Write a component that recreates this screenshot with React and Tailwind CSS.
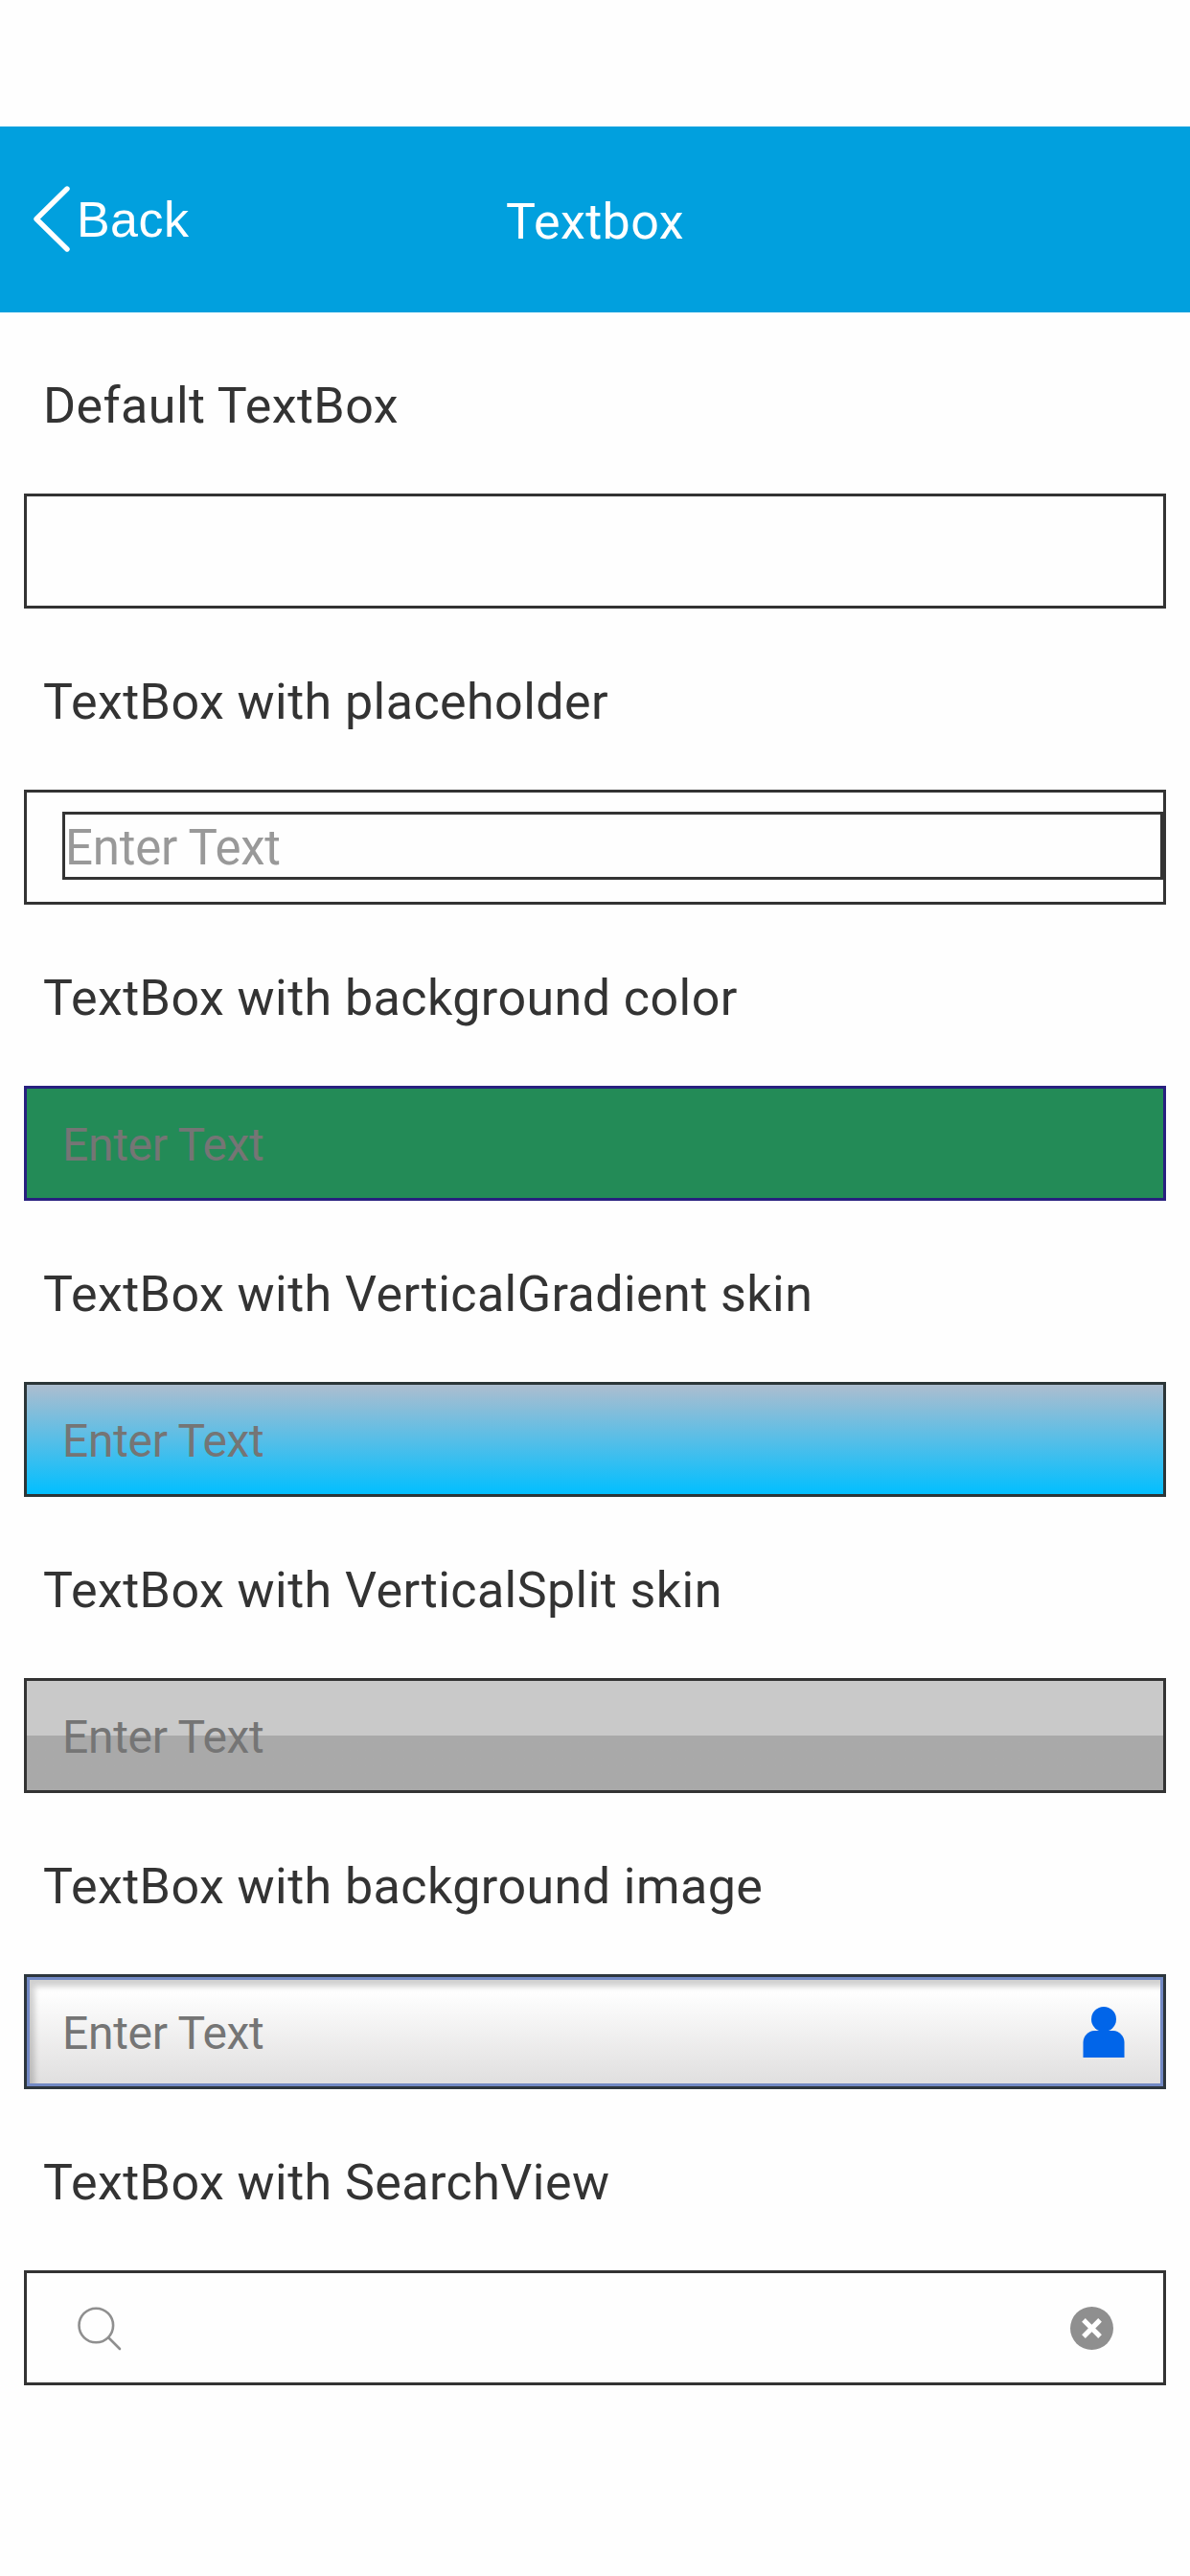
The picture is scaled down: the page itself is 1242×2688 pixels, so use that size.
function BackChevron() {
  return (
    <svg className="h-[74px] w-[44px]" viewBox="0 0 44 74" fill="none" stroke="#fff" strokeWidth="5.4" strokeLinecap="round" strokeLinejoin="round">
      <path d="M38 5 L6 36.5 L38 68" />
    </svg>
  );
}

function UserIcon() {
  return (
    <svg className="h-[56px] w-[46px]" viewBox="0 0 46 56" fill="#0165e9">
      <ellipse cx="23" cy="14" rx="13" ry="13" />
      <path d="M1.5 54 V38 C1.5 32 7 26 13 26 H33 C39 26 44.5 32 44.5 38 V54 Z" />
    </svg>
  );
}

function SearchIcon() {
  return (
    <svg className="h-[46px] w-[46px]" viewBox="0 0 46 46" fill="none" stroke="#8f8f8f" strokeWidth="2.6" strokeLinecap="round">
      <circle cx="19.3" cy="19.5" r="17.8" />
      <path d="M32.5 32.5 L44 44" />
    </svg>
  );
}

function ClearIcon() {
  return (
    <svg className="h-[45px] w-[45px]" viewBox="0 0 45 45">
      <circle cx="22.5" cy="22.5" r="22.5" fill="#8f8f8f" />
      <path d="M15.8 15.8 L29.2 29.2 M29.2 15.8 L15.8 29.2" stroke="#fff" strokeWidth="5.2" strokeLinecap="square" />
    </svg>
  );
}

function Field({ label, box, children }) {
  return (
    <section className="h-[309px] px-[25px]">
      <h2 className="h-[189px] pl-5 pt-[67px] text-[52px] leading-[61px] tracking-[0.43px] whitespace-nowrap text-[#333]">
        <span>{label}</span>
      </h2>
      <div className={`flex h-[120px] border-3 ${box}`}>{children}</div>
    </section>
  );
}

function Hint() {
  return <span className="ml-[37px] mt-[31px] text-[48px] leading-[56px] tracking-[-0.3px] whitespace-nowrap text-[#757575]">Enter Text</span>;
}

export default function App() {
  return (
    <main className="h-[2688px] w-[1242px] overflow-hidden bg-[#fefefe] pt-[132px] font-['Roboto',sans-serif]">
      <header className="grid h-[194px] grid-cols-3 bg-[#01a0de] text-[52px] tracking-[0.43px] text-white">
        <div className="flex items-start pl-[32px] pt-[60px]">
          <BackChevron />
          <span className="ml-[4px] mt-[7px] font-['Liberation_Sans',sans-serif] leading-[60px]">Back</span>
        </div>
        <h1 className="pt-[69px] text-center leading-[61px]">Textbox</h1>
      </header>
      <Field label="Default TextBox" box="border-[#333]" />
      <Field label="TextBox with placeholder" box="border-[#333]">
        <div className="ml-[37px] mt-[20px] h-[71px] flex-1 border-3 border-[#333] pt-1 text-[51px] leading-[61px] tracking-[-0.2px] text-[#999]">Enter Text</div>
      </Field>
      <Field label="TextBox with background color" box="border-[#28207f] bg-[#238b57]">
        <Hint />
      </Field>
      <Field label="TextBox with VerticalGradient skin" box="border-[#2c3638] bg-linear-to-b/srgb from-[#adbdcf] to-[#02bfff]">
        <Hint />
      </Field>
      <Field label="TextBox with VerticalSplit skin" box="border-[#333] bg-linear-to-b from-[#c9c9c9] from-50% to-[#a9a9a9] to-50%">
        <Hint />
      </Field>
      <Field label="TextBox with background image" box="border-[#2d363d]">
        <div className="flex flex-1 justify-between border-3 border-[#7289c4] bg-linear-to-b from-white from-10% to-[#e0dfdf] shadow-[inset_5px_7px_6px_#00000030]">
          <span className="ml-[34px] mt-[28px] text-[48px] leading-[56px] tracking-[-0.3px] text-[#757575]">Enter Text</span>
          <div className="mr-[36px] mt-[27px]">
            <UserIcon />
          </div>
        </div>
      </Field>
      <Field label="TextBox with SearchView" box="items-start justify-between border-[#333] pl-[53px] pr-[52px] pt-[35px]">
        <SearchIcon />
        <ClearIcon />
      </Field>
    </main>
  );
}
